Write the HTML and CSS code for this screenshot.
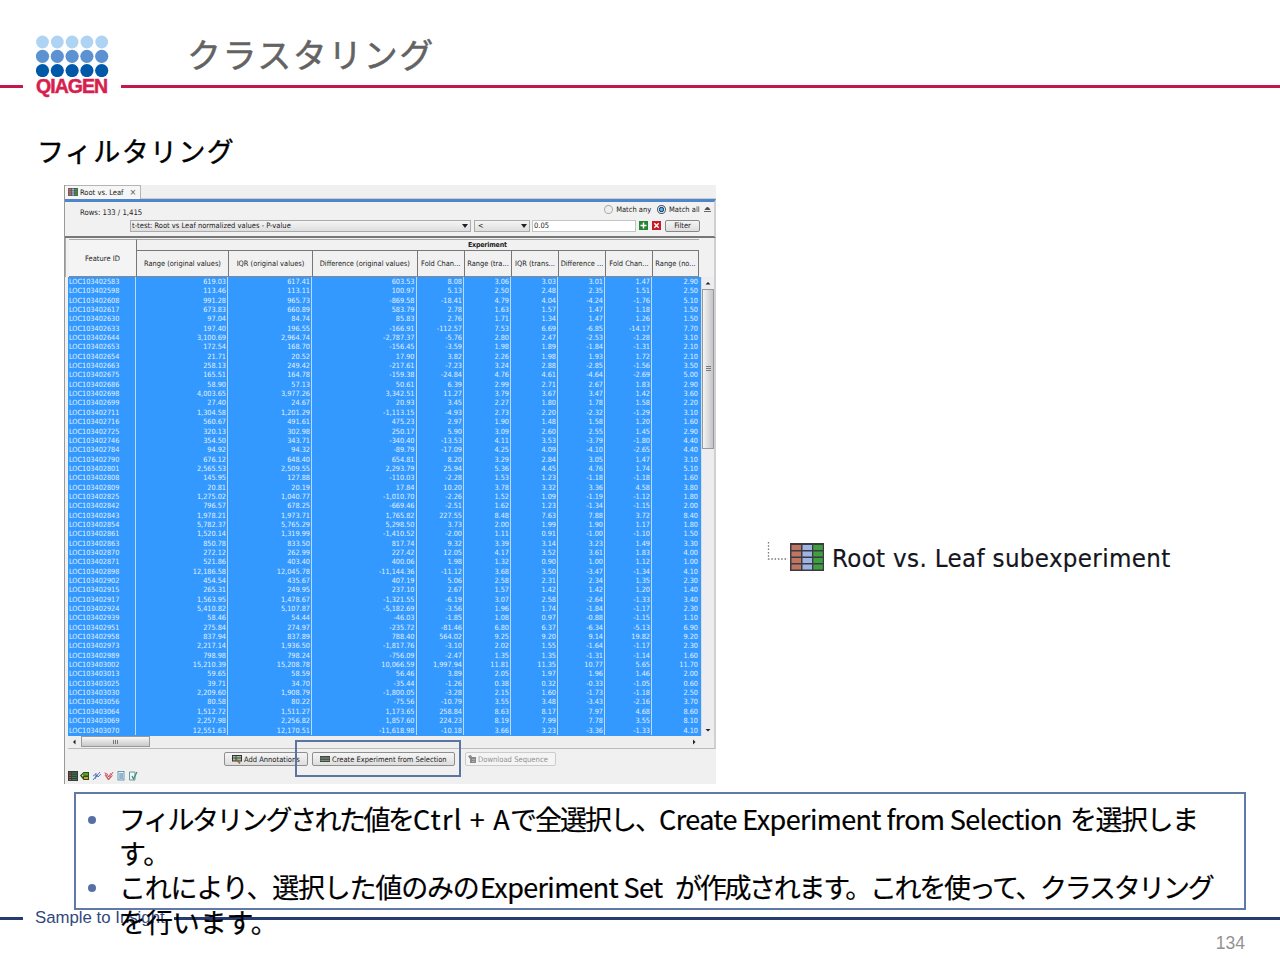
FILE: index.html
```html
<!DOCTYPE html>
<html lang="ja">
<head>
<meta charset="utf-8">
<title>クラスタリング</title>
<link rel="stylesheet" href="styles.css">
</head>
<body>
<svg class="defs" width="0" height="0">
  <symbol id="grid" viewBox="0 0 34 28">
    <rect width="34" height="28" fill="#3a3a42"/>
    <g fill="#bf7560"><rect x="1.5" y="2" width="9.5" height="5"/><rect x="1.5" y="8.5" width="9.5" height="5"/><rect x="1.5" y="15" width="9.5" height="5"/><rect x="1.5" y="21.5" width="9.5" height="5"/></g>
    <g class="mid"><rect x="12.5" y="2" width="9.5" height="5"/><rect x="12.5" y="8.5" width="9.5" height="5"/><rect x="12.5" y="15" width="9.5" height="5"/><rect x="12.5" y="21.5" width="9.5" height="5"/></g>
    <g fill="#3f9f40"><rect x="23.3" y="2" width="9.5" height="5"/><rect x="23.3" y="8.5" width="9.5" height="5"/><rect x="23.3" y="15" width="9.5" height="5"/><rect x="23.3" y="21.5" width="9.5" height="5"/></g>
  </symbol>
</svg>
<div class="slide">
  <header class="top">
    <i class="rule rule-left"></i>
    <div class="logo">
      <svg width="74" height="42" viewBox="0 0 74 42">
        <g fill="#afd3f2"><circle cx="6.5" cy="7" r="6.4"/><circle cx="21.3" cy="7" r="6.4"/><circle cx="36.1" cy="7" r="6.4"/><circle cx="50.9" cy="7" r="6.4"/><circle cx="65.7" cy="7" r="6.4"/></g>
        <g fill="#5c92d2"><circle cx="6.5" cy="21.3" r="6.6"/><circle cx="21.3" cy="21.3" r="6.6"/><circle cx="36.1" cy="21.3" r="6.6"/><circle cx="50.9" cy="21.3" r="6.6"/><circle cx="65.7" cy="21.3" r="6.6"/></g>
        <g fill="#0059a8"><circle cx="6.5" cy="35.6" r="6.6"/><circle cx="21.3" cy="35.6" r="6.6"/><circle cx="36.1" cy="35.6" r="6.6"/><circle cx="50.9" cy="35.6" r="6.6"/><circle cx="65.7" cy="35.6" r="6.6"/></g>
      </svg>
      <div class="brand">QIAGEN</div>
    </div>
    <div class="title-area"><h1>クラスタリング</h1><i class="rule"></i></div>
  </header>
  <h2>フィルタリング</h2>
  <main>
    <section class="window">
      <div class="tabs"><div class="tab"><svg width="10" height="8" class="dark"><use href="#grid"/></svg><span>Root vs. Leaf</span><b>×</b></div></div>
      <div class="filter">
        <div class="filter-top"><span class="count">Rows: 133 / 1,415</span><i class="radio"></i><span class="any">Match any</span><i class="radio on"></i><span class="all">Match all</span>
          <svg class="collapse" width="7" height="7"><path d="M0 5.5H7M1 3.5L3.5 1L6 3.5Z" stroke="#444" stroke-width=".8" fill="#444"/></svg></div>
        <div class="filter-row">
          <div class="select test"><span>t-test: Root vs Leaf normalized values - P-value</span><i></i></div>
          <div class="select op"><span>&lt;</span><i></i></div>
          <div class="field">0.05</div>
          <svg class="add" width="9" height="9"><rect width="9" height="9" fill="#268332"/><path d="M4.5 1.5V7.5M1.5 4.5H7.5" stroke="#fff" stroke-width="1.5"/></svg>
          <svg class="del" width="9" height="9"><rect width="9" height="9" fill="#c51a27"/><path d="M2.3 2.3L6.7 6.7M6.7 2.3L2.3 6.7" stroke="#fff" stroke-width="1.4"/></svg>
          <div class="btn filter-btn">Filter</div>
        </div>
      </div>
      <div class="table-head">
        <div class="feature">Feature ID</div>
        <div class="group">
          <div class="group-name">Experiment</div>
          <div class="cols"><span>Range (original values)</span><span>IQR (original values)</span><span>Difference (original values)</span><span>Fold Chan...</span><span>Range (tra...</span><span>IQR (trans...</span><span>Difference ...</span><span>Fold Chan...</span><span>Range (no...</span></div>
        </div>
      </div>
      <div class="table-area">
        <div class="rows" id="rows"></div>
        <div class="vscroll"><svg width="12" height="12"><path d="M3.5 7.5H8.5L6 5Z" fill="#222"/></svg><div class="vthumb"><i></i></div><svg width="12" height="12"><path d="M3.5 5H8.5L6 7.5Z" fill="#222"/></svg></div>
      </div>
      <div class="hscroll"><svg width="13" height="12"><path d="M7.5 3.5V8.5L5 6Z" fill="#222"/></svg><div class="hthumb"><i></i></div><svg class="right" width="12" height="12"><path d="M5 3.5V8.5L7.5 6Z" fill="#222"/></svg></div>
      <div class="actions">
        <div class="btn annotate"><svg width="10" height="9"><rect x=".5" y=".5" width="9" height="5.5" fill="#a8b8a4" stroke="#333"/><path d="M1 3H9M4 1V6" stroke="#35553a"/><path d="M4 4L8 8.5" stroke="#8b6b32" stroke-width="1.5"/></svg><span>Add Annotations</span></div>
        <div class="btn create"><svg width="10" height="6"><rect width="10" height="6" fill="#3d4a40"/><path d="M.5 2H9.5M.5 4.3H9.5" stroke="#8c9c8d"/></svg><span>Create Experiment from Selection</span></div>
        <div class="btn download"><svg width="9" height="9"><path d="M0 1L3 0L4 2H8V8H2V4Z" fill="#888"/><path d="M4 4.5H7M4 6.5H7" stroke="#bbb" stroke-width=".7"/></svg><span>Download Sequence</span></div>
      </div>
      <div class="views">
        <svg width="10" height="10"><rect width="10" height="10" fill="#333b38"/><path d="M1 2H3.3M1 4.2H3.3M1 6.4H3.3M1 8.6H3.3" stroke="#a46052"/><path d="M4 2H9M4 4.2H9M4 6.4H9M4 8.6H9" stroke="#408252"/></svg>
        <svg width="10" height="10"><path d="M0 4.5L3.5 1H9V9H3.5Z" fill="#294f18"/><rect x="3.5" y="2" width="4.5" height="2.5" fill="#5da321"/><rect x="4" y="6" width="4" height="2" fill="#d29c32"/><circle cx="2.6" cy="4.5" r=".9" fill="#d6d66b"/></svg>
        <svg width="10" height="10"><path d="M1 9L8 1M1 5L4 3M3 8L5 4L6 6L9 3M4 2V6" stroke="#4965bd" stroke-width=".9" fill="none"/></svg>
        <svg width="10" height="10"><path d="M.8 1.5L4.5 8.5L9 1M1 4L4.5 9L8.5 4.5M2.5 2L4.8 6L7 2" stroke="#c84652" stroke-width=".9" fill="none"/></svg>
        <svg width="10" height="10"><rect x="2" y=".5" width="6" height="8.5" fill="#e6f2fa" stroke="#547f9b" stroke-width=".8"/><path d="M3.2 3H7M3.2 5H7M3.2 7H7" stroke="#3979a7"/></svg>
        <svg width="10" height="10"><path d="M1.5 1H7V9H1.5Z" fill="#edf6f7" stroke="#547b85" stroke-width=".8"/><path d="M4 5L5.5 8L9 1" stroke="#2f8c75" stroke-width="1.2" fill="none"/></svg>
      </div>
      <div class="highlight"></div>
    </section>
    <section class="tree">
      <svg class="branch" width="22" height="20"><path d="M1.5 1V18H21" fill="none" stroke="#777" stroke-width="1.3" stroke-dasharray="1.5 1.8"/></svg>
      <svg class="tree-icon" width="34" height="28"><use href="#grid"/></svg>
      <span>Root vs. Leaf subexperiment</span>
    </section>
  </main>
  <ul class="note">
    <li><div><span class="a">フィルタリングされた値を</span><span class="b">Ctrl + A</span><span class="c">で全選択し、</span><span class="d">Create Experiment from Selection</span> <span class="e">を選択しま</span></div><div><span class="f">す。</span></div></li>
    <li><div><span class="g">これにより、選択した値のみの</span><span class="h">Experiment Set</span> <span class="i">が作成されます。これを使って、クラスタリング</span></div><div><span class="j">を行います。</span></div></li>
  </ul>
  <footer>
    <div class="foot-line"><i class="fl"></i><span>Sample to Insight</span><i class="fr"></i></div>
    <div class="page">134</div>
  </footer>
</div>
<script src="rows.js"></script>
</body>
</html>
```
FILE: styles.css
```css
* { box-sizing: border-box; }
body { margin: 0; background: #fff; }
.defs { position: absolute; }
i { font-style: normal; }
svg { display: block; flex: none; }
.slide { width: 1280px; height: 960px; overflow: hidden; display: flex; flex-direction: column; font-family: "Noto Sans CJK JP", sans-serif; }

.top { display: flex; height: 100px; flex: none; }
.rule { display: block; height: 3px; background: #c5174a; }
.rule-left { width: 23px; margin-top: 85px; }
.logo { width: 98px; padding: 35px 0 0 13px; }
.brand { font: bold 19.5px/18px "Liberation Sans", Arial, sans-serif; color: #d71f4f; letter-spacing: -.95px; -webkit-text-stroke: .5px #d71f4f; white-space: nowrap; }
.title-area { flex: 1; }
h1 { margin: 0; height: 85px; padding: 29px 0 0 66px; font-size: 34px; line-height: 50px; font-weight: 400; color: #636363; letter-spacing: 1.5px; -webkit-text-stroke: .5px #636363; }
h2 { margin: 0; height: 85px; flex: none; padding: 31px 0 0 37px; font-size: 27px; line-height: 40px; font-weight: 400; color: #000; letter-spacing: 1.4px; -webkit-text-stroke: .4px #000; }

main { display: flex; height: 600px; flex: none; padding-left: 64px; }
.window { position: relative; width: 652px; height: 599px; background: #f0f0f0; border-left: 1px solid #999; font-family: "DejaVu Sans Condensed", "DejaVu Sans", sans-serif; font-stretch: condensed; font-size: 7.5px; color: #222; display: flex; flex-direction: column; white-space: nowrap; }
.tabs { height: 14px; border-bottom: 1px solid #ccc; flex: none; }
.tab { display: flex; align-items: center; width: 76px; height: 14px; padding: 0 0 1px 3px; border: 1px solid #b5b5b5; border-bottom: 0; border-left: 0; background: #f6f6f6; }
.tab span { margin-left: 2px; }
.tab b { margin-left: 6px; font-weight: 400; font-size: 9px; color: #555; }
.mid { fill: #a0b4e4; }
.dark .mid { fill: #558368; }
.filter { height: 39px; flex: none; border-top: 3px solid #4d86cb; padding: 2px 3px 0 3px; border-bottom: 2px solid #777; border-right: 2px solid #d0d0d0; background: #f1f1f1; }
.filter-top { display: flex; align-items: center; height: 11px; }
.count { width: 537px; padding: 5px 0 0 12px; font-size: 7.7px; }
.radio { width: 9px; height: 9px; border: 1px solid #aaa; border-radius: 50%; background: #eee; }
.radio.on { border-color: #456; background: radial-gradient(circle, #58b5e8 20%, #1c4570 45%, #e6eef3 60%); }
.any { width: 38px; margin: 0 3px 0 3px; }
.all { width: 32px; margin-left: 3px; }
.collapse { margin-left: 3px; }
.filter-row { display: flex; height: 13px; padding-left: 62px; margin-top: 4px; align-items: center; }
.select, .btn { display: flex; align-items: center; background: linear-gradient(#f5f5f5, #dedede); border: 1px solid #aaa; }
.select { height: 12px; justify-content: space-between; padding: 0 2px 0 1px; }
.select i { border: 3px solid transparent; border-top: 4px solid #222; border-bottom: 0; }
.test { width: 341px; }
.op { width: 56px; margin-left: 3px; padding-left: 3px; }
.field { height: 12px; width: 104px; margin-left: 2px; padding-left: 1px; border: 1px solid #c4c4c4; background: #fff; line-height: 10px; }
.add { margin-left: 3px; }
.del { margin-left: 4px; }
.filter-btn { width: 35px; height: 12px; margin-left: 4px; justify-content: center; border-color: #888; border-radius: 2px; }

.table-head { display: flex; height: 39px; flex: none; padding: 1px 15px 0 3px; border-right: 2px solid #d0d0d0; background: #f1f1f1; border-left: 1px solid #aaa; }
.feature { width: 68px; display: flex; align-items: center; justify-content: center; border-right: 1px solid #777; border-bottom: 1px solid #888; border-top: 1px solid #aaa; background: #f4f4f4; }
.group { flex: 1; }
.group-name { height: 12px; border-bottom: 1px solid #777; border-top: 1px solid #aaa; padding-left: 331px; line-height: 11px; font-weight: 700; font-size: 7px; letter-spacing: -.2px; }
.cols { display: grid; height: 26px; grid-template-columns: 92px 84px 104.5px 47.5px 47px 47px 47px 47px 1fr; }
.cols span { border-right: 1px solid #777; border-bottom: 1px solid #888; text-align: center; line-height: 26px; overflow: hidden; font-size: 7.4px; }
.table-area { display: flex; height: 459px; flex: none; padding-left: 3px; border-right: 2px solid #d0d0d0; }
.rows { width: 633px; background: #3399ff; color: #e4f1ff; font-size: 7.25px; }
.row { display: grid; height: 9.347px; grid-template-columns: 68px 92px 84px 104.5px 47.5px 47px 47px 47px 47px 1fr; }
.row span { line-height: 9.3px; text-align: right; padding-right: 1px; border-right: 1px solid #b9dbf7; height: 9.4px; }
.row span:first-child { text-align: left; padding-left: 1px; }
.row span:last-child { padding-right: 3px; border: 0; }
.vscroll { width: 13px; background: #ededf0; display: flex; flex-direction: column; border-left: 1px solid #ddd; }
.vthumb { height: 160px; border: 1px solid #999; background: linear-gradient(90deg, #f4f4f4, #c4c4c9); display: flex; align-items: center; justify-content: center; margin-bottom: auto; }
.vthumb i { width: 5px; height: 6px; background: repeating-linear-gradient(#777 0 1px, transparent 1px 2px); }
.hscroll { height: 13px; flex: none; display: flex; margin-left: 3px; border-right: 2px solid #d0d0d0; border-bottom: 1px solid #bbb; background: #eee; }
.hthumb { width: 69px; height: 11px; border: 1px solid #999; background: linear-gradient(#f7f7f7, #c9c9c9); display: flex; justify-content: center; align-items: center; }
.hthumb i { width: 6px; height: 4px; background: repeating-linear-gradient(90deg, #777 0 1px, transparent 1px 2px); }
.right { margin: 0 14px 0 auto; }
.actions { display: flex; height: 18px; flex: none; padding: 3px 0 0 159px; }
.actions .btn { height: 14px; border-color: #8f8f8f; border-radius: 2px; font-size: 7.5px; }
.actions span { margin-left: 2px; }
.annotate { width: 84px; padding-left: 7px; }
.create { width: 143px; margin-left: 4px; padding-left: 7px; }
.actions .download { width: 91px; margin-left: 10px; padding-left: 2px; color: #929292; border-color: #ccc; background: #f4f4f4; }
.actions .download span { font-size: 7.6px; margin-left: 1px; }
.views { display: flex; gap: 2px; padding: 4px 0 0 3px; }
.highlight { position: absolute; left: 230px; top: 555px; width: 166px; height: 37px; border: 2px solid #5b75a3; }

.tree { display: flex; height: 40px; margin: 356px 0 0 51px; font: 25.6px/35px "DejaVu Sans Condensed", "DejaVu Sans", sans-serif; font-stretch: condensed; color: #151520; white-space: nowrap; }
.tree-icon { margin: 2px 0 0 1px; }
.tree span { margin-left: 8px; letter-spacing: .35px; -webkit-text-stroke: .2px #151520; }

.note { list-style: none; position: relative; z-index: 1; margin: 7px 0 0 74px; padding: 8px 0 0 43px; width: 1172px; height: 118px; flex: none; border: 2px solid #6079a8; font-size: 27px; line-height: 34.2px; color: #000; white-space: nowrap; }
.note li { position: relative; }
.note li::before { content: ""; position: absolute; left: -31px; top: 14px; width: 8px; height: 8px; border-radius: 50%; background: #5670a5; }
.note div { height: 34.2px; display: flex; }
.note span { display: block; flex: none; -webkit-text-stroke: .2px #000; }
.a { width: 294px; letter-spacing: -2.5px; }
.b { width: 97px; letter-spacing: 1.2px; }
.c { width: 149px; letter-spacing: -2px; }
.d { width: 411px; letter-spacing: -.6px; }
.e { letter-spacing: -1.5px; }
.g { width: 361px; letter-spacing: -1.2px; }
.h { width: 195px; letter-spacing: -.65px; }
.i { letter-spacing: -2.3px; }
.j { letter-spacing: -.1px; }

footer { margin-top: -3px; font-family: "Liberation Sans", Arial, sans-serif; }
.foot-line { display: flex; align-items: center; height: 22px; font-size: 16.8px; color: #33477c; }
.foot-line i { height: 3px; background: #263c70; }
.fl { width: 23px; margin-right: 12px; }
.fr { flex: 1; margin-left: 9px; }
.page { text-align: right; padding: 4px 35px 0 0; font-size: 17.5px; line-height: 20px; color: #929292; }
```
FILE: rows.js
```js
const data = `402583 619.03 617.41 603.53 8.08 3.06 3.03 3.01 1.47 2.90
402598 113.46 113.11 100.97 5.13 2.50 2.48 2.35 1.51 2.50
402608 991.28 965.73 -869.58 -18.41 4.79 4.04 -4.24 -1.76 5.10
402617 673.83 660.89 583.79 2.78 1.63 1.57 1.47 1.18 1.50
402630 97.04 84.74 85.83 2.76 1.71 1.34 1.47 1.26 1.50
402633 197.40 196.55 -166.91 -112.57 7.53 6.69 -6.85 -14.17 7.70
402644 3,100.69 2,964.74 -2,787.37 -5.76 2.80 2.47 -2.53 -1.28 3.10
402653 172.54 168.70 -156.45 -3.59 1.98 1.89 -1.84 -1.31 2.10
402654 21.71 20.52 17.90 3.82 2.26 1.98 1.93 1.72 2.10
402663 258.13 249.42 -217.61 -7.23 3.24 2.88 -2.85 -1.56 3.50
402675 165.51 164.78 -159.38 -24.84 4.76 4.61 -4.64 -2.69 5.00
402686 58.90 57.13 50.61 6.39 2.99 2.71 2.67 1.83 2.90
402698 4,003.65 3,977.26 3,342.51 11.27 3.79 3.67 3.47 1.42 3.60
402699 27.40 24.67 20.93 3.45 2.27 1.80 1.78 1.58 2.20
402711 1,304.58 1,201.29 -1,113.15 -4.93 2.73 2.20 -2.32 -1.29 3.10
402716 560.67 491.61 475.23 2.97 1.90 1.48 1.58 1.20 1.60
402725 320.13 302.98 250.17 5.90 3.09 2.60 2.55 1.45 2.90
402746 354.50 343.71 -340.40 -13.53 4.11 3.53 -3.79 -1.80 4.40
402784 94.92 94.32 -89.79 -17.09 4.25 4.09 -4.10 -2.65 4.40
402790 676.12 648.40 654.81 8.20 3.29 2.84 3.05 1.47 3.10
402801 2,565.53 2,509.55 2,293.79 25.94 5.36 4.45 4.76 1.74 5.10
402808 145.95 127.88 -110.03 -2.28 1.53 1.23 -1.18 -1.18 1.60
402809 20.81 20.19 17.84 10.20 3.78 3.32 3.36 4.58 3.80
402825 1,275.02 1,040.77 -1,010.70 -2.26 1.52 1.09 -1.19 -1.12 1.80
402842 796.57 678.25 -669.46 -2.51 1.62 1.23 -1.34 -1.15 2.00
402843 1,978.21 1,973.71 1,765.82 227.55 8.48 7.63 7.88 3.72 8.40
402854 5,782.37 5,765.29 5,298.50 3.73 2.00 1.99 1.90 1.17 1.80
402861 1,520.14 1,319.99 -1,410.52 -2.00 1.11 0.91 -1.00 -1.10 1.50
402863 850.78 833.50 817.74 9.32 3.39 3.14 3.23 1.49 3.30
402870 272.12 262.99 227.42 12.05 4.17 3.52 3.61 1.83 4.00
402871 521.86 403.40 400.06 1.98 1.32 0.90 1.00 1.12 1.00
402898 12,186.58 12,045.78 -11,144.36 -11.12 3.68 3.50 -3.47 -1.34 4.10
402902 454.54 435.67 407.19 5.06 2.58 2.31 2.34 1.35 2.30
402915 265.31 249.95 237.10 2.67 1.57 1.42 1.42 1.20 1.40
402917 1,563.95 1,478.67 -1,321.55 -6.19 3.07 2.58 -2.64 -1.33 3.40
402924 5,410.82 5,107.87 -5,182.69 -3.56 1.96 1.74 -1.84 -1.17 2.30
402939 58.46 54.44 -46.03 -1.85 1.08 0.97 -0.88 -1.15 1.10
402951 275.84 274.97 -235.72 -81.46 6.80 6.37 -6.34 -5.13 6.90
402958 837.94 837.89 788.40 564.02 9.25 9.20 9.14 19.82 9.20
402973 2,217.14 1,936.50 -1,817.76 -3.10 2.02 1.55 -1.64 -1.17 2.30
402989 798.98 798.24 -756.09 -2.47 1.35 1.35 -1.31 -1.14 1.60
403002 15,210.39 15,208.78 10,066.59 1,997.94 11.81 11.35 10.77 5.65 11.70
403013 59.65 58.59 56.46 3.89 2.05 1.97 1.96 1.46 2.00
403025 39.71 34.70 -35.44 -1.26 0.38 0.32 -0.33 -1.05 0.60
403030 2,209.60 1,908.79 -1,800.05 -3.28 2.15 1.60 -1.73 -1.18 2.50
403056 80.58 80.22 -75.56 -10.79 3.55 3.48 -3.43 -2.16 3.70
403064 1,512.72 1,511.27 1,173.65 258.84 8.63 8.17 7.97 4.68 8.60
403069 2,257.98 2,256.82 1,857.60 224.23 8.19 7.99 7.78 3.55 8.10
403070 12,551.63 12,170.51 -11,618.98 -10.18 3.66 3.23 -3.36 -1.33 4.10`;

const rows = document.getElementById("rows");
for (const line of data.split("\n")) {
  const row = document.createElement("div");
  row.className = "row";
  ("LOC103" + line).split(" ").forEach((value) => {
    const cell = document.createElement("span");
    cell.textContent = value;
    row.append(cell);
  });
  rows.append(row);
}
```
